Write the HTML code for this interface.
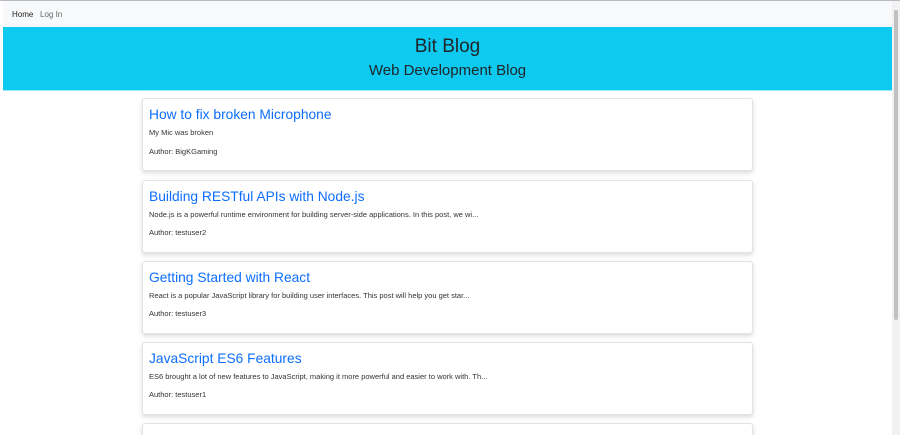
<!DOCTYPE html>
<html><head><style>
*{margin:0;padding:0;box-sizing:border-box}
html,body{width:900px;height:435px;overflow:hidden;background:#fff;font-family:"Liberation Sans",sans-serif}
.top{position:absolute;left:0;top:0;width:900px;height:1px;background:#b8bcc0}
.nav{position:absolute;left:3px;top:1px;width:889px;height:26px;background:#f8f9fa;font-size:8px;color:#222}
.nav span{position:absolute;top:9px}
.banner{position:absolute;left:3px;top:27px;width:889px;height:64px;background:#0dcaf0;text-align:center;color:#212529;border-bottom:1px solid #9eeaf9}
.banner h1{position:absolute;width:100%;top:9px;font-size:19px;font-weight:normal}
.banner h2{position:absolute;width:100%;top:35px;font-size:15px;font-weight:normal}
.sb{position:absolute;left:892px;top:1px;width:8px;height:434px;background:#f1f1f1}
.sb div{position:absolute;left:2px;top:9px;width:4px;height:310px;background:#c1c1c1;border-radius:2px}
.card{position:absolute;left:142px;width:611px;height:73px;background:#fff;border:1px solid #e3e3e3;border-radius:3px;box-shadow:0 2px 5px rgba(0,0,0,.15)}
.card h3{position:absolute;left:6px;top:8px;font-size:13.8px;font-weight:normal;color:#0d6efd}
.card p{position:absolute;left:6px;font-size:7.5px;color:#333}
</style></head><body>
<div class="top"></div>
<div class="nav"><span style="left:9px">Home</span><span style="left:37px;color:#666">Log In</span></div>
<div class="banner"><h1>Bit Blog</h1><h2>Web Development Blog</h2></div>
<div class="sb"><div></div></div>
<div class="card" style="top:98px"><h3>How to fix broken Microphone</h3><p style="top:29px">My Mic was broken</p><p style="top:48px">Author: BigKGaming</p></div>
<div class="card" style="top:180px"><h3>Building RESTful APIs with Node.js</h3><p style="top:29px">Node.js is a powerful runtime environment for building server-side applications. In this post, we wi...</p><p style="top:47px">Author: testuser2</p></div>
<div class="card" style="top:261px"><h3>Getting Started with React</h3><p style="top:29px">React is a popular JavaScript library for building user interfaces. This post will help you get star...</p><p style="top:47px">Author: testuser3</p></div>
<div class="card" style="top:342px"><h3>JavaScript ES6 Features</h3><p style="top:29px">ES6 brought a lot of new features to JavaScript, making it more powerful and easier to work with. Th...</p><p style="top:47px">Author: testuser1</p></div>
<div class="card" style="top:423px;height:12px;border-bottom:none;border-radius:3px 3px 0 0"></div>
</body></html>
